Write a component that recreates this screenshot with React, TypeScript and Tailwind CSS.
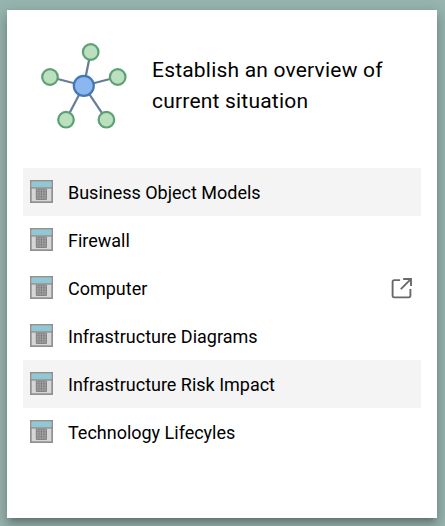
import React from 'react';

interface Item {
  label: string;
  highlighted?: boolean;
  external?: boolean;
}

const items: Item[] = [
  { label: 'Business Object Models', highlighted: true },
  { label: 'Firewall' },
  { label: 'Computer', external: true },
  { label: 'Infrastructure Diagrams' },
  { label: 'Infrastructure Risk Impact', highlighted: true },
  { label: 'Technology Lifecyles' },
];

// Outer nodes of the network illustration
const nodes = [
  { x: 50.7, y: 12 },
  { x: 10, y: 37 },
  { x: 77.7, y: 37 },
  { x: 26, y: 79.7 },
  { x: 66.4, y: 79.7 },
];

const NetworkIcon: React.FC = () => (
  <svg width="88" height="92" viewBox="0 0 88 92" className="shrink-0">
    {nodes.map((n) => (
      <line key={`l-${n.x}`} x1="43.8" y1="45.8" x2={n.x} y2={n.y} stroke="#667d97" strokeWidth="2.2" />
    ))}
    {nodes.map((n) => (
      <circle key={`c-${n.x}`} cx={n.x} cy={n.y} r="7.8" fill="#bae0bd" stroke="#5ea073" strokeWidth="2.2" />
    ))}
    <circle cx="43.8" cy="45.8" r="10" fill="#8bb7f0" stroke="#4478b4" strokeWidth="2.2" />
  </svg>
);

const GridIcon: React.FC = () => (
  <svg width="23" height="23" viewBox="0 0 23 23" className="shrink-0">
    <rect x="0.85" y="0.85" width="21.3" height="21.3" fill="#d6d6d6" stroke="#909090" strokeWidth="1.7" />
    <rect x="1.7" y="1.7" width="19.6" height="5.6" fill="#91c8d6" />
    <path d="M1 7.9h21" stroke="#909090" strokeWidth="1.5" />
    <rect x="5.8" y="8.6" width="11.2" height="11.4" rx="1" fill="#858585" />
    <path
      d="M7 10.5h9M7 13h9M7 15.5h9M7 18h9"
      stroke="#aaaaaa"
      strokeWidth="1.3"
      strokeDasharray="1.4 1.1"
    />
  </svg>
);

const ExternalIcon: React.FC = () => (
  <svg
    width="22"
    height="23"
    viewBox="0.8 0 22 23"
    fill="none"
    stroke="#696969"
    strokeWidth="1.9"
    className="shrink-0"
  >
    <path d="M9.9 4.1H4.2a1.8 1.8 0 0 0-1.8 1.8v13.7a1.8 1.8 0 0 0 1.8 1.8h14.2a1.8 1.8 0 0 0 1.8-1.8V13" />
    <path d="M13 3h7.8V10M20.6 3.2 10.6 13.2" />
  </svg>
);

const App: React.FC = () => {
  return (
    <div className="h-[526px] w-[445px] overflow-hidden bg-[#97b4ae] pt-[10px] pl-[7px] font-['Roboto','Liberation_Sans',sans-serif] text-black">
      <div className="h-[508px] w-[430px] bg-white px-4 pt-[30px] shadow-[0_5px_5px_-3px_rgba(0,0,0,0.2),0_8px_10px_1px_rgba(0,0,0,0.14),0_3px_14px_2px_rgba(0,0,0,0.12)]">
        <div className="flex h-32 items-start pl-[17px]">
          <NetworkIcon />
          <h2 className="ml-6 w-[250px] pt-[15px] text-[21px] leading-[31px] tracking-[0.2px]">
            Establish an overview of current situation
          </h2>
        </div>
        <ul className="w-[398px]">
          {items.map((item) => (
            <li
              key={item.label}
              className={`flex h-12 items-center pr-[8px] pb-px pl-[7px] ${item.highlighted ? 'bg-[#f4f4f4]' : ''}`}
            >
              <GridIcon />
              <span className="ml-[15px] flex-1 pt-[2px] text-[18px] leading-[26px] tracking-[-0.01px]">{item.label}</span>
              {item.external && <ExternalIcon />}
            </li>
          ))}
        </ul>
      </div>
    </div>
  );
};

export default App;
